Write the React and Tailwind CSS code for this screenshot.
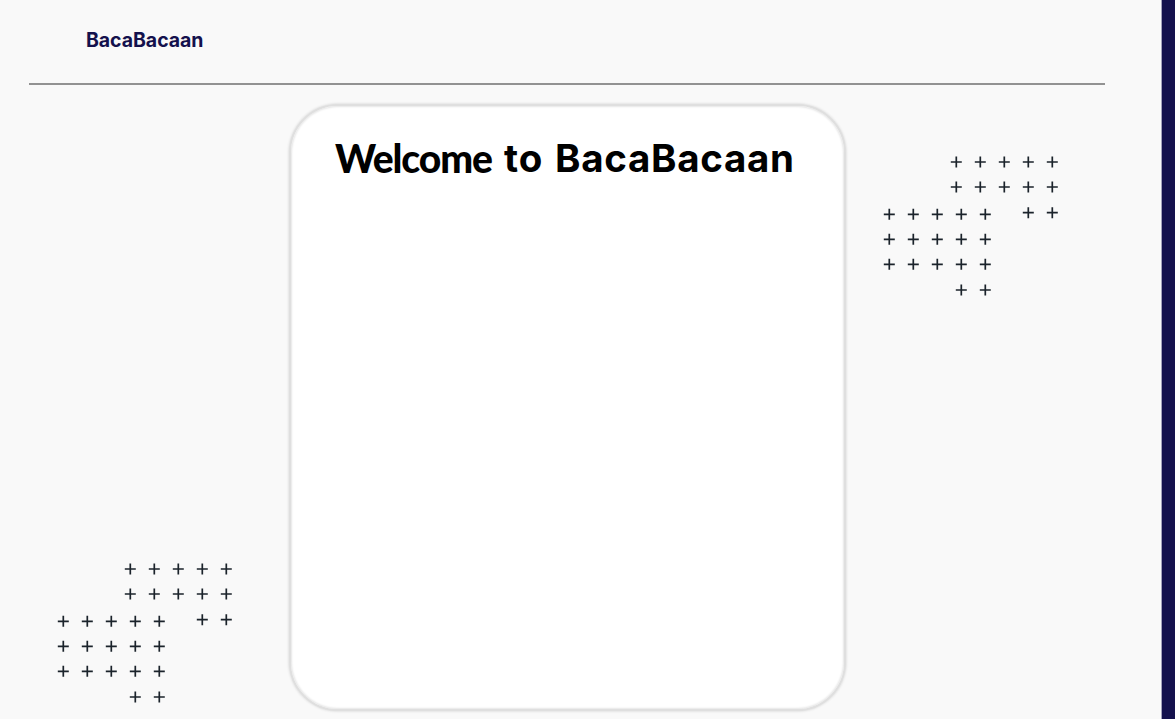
const marks = [
  ...[17, 42].flatMap((y) => [86, 110, 134, 158, 182].map((x) => [x, y])),
  [158, 67.7], [182, 67.7],
  ...[69.3, 94.3, 119.3].flatMap((y) => [19, 43, 67, 91, 115].map((x) => [x, y])),
  [91, 145], [115, 145],
];

function PlusCluster({ className }) {
  return (
    <svg width="200" height="160" viewBox="0 0 200 160" className={className} aria-hidden="true">
      <path
        d={marks.map(([x, y]) => `M${x - 5.2} ${y}h11M${x + 0.3} ${y - 5.5}v11`).join("")}
        stroke="#1b232b"
        strokeWidth="1.7"
        fill="none"
      />
    </svg>
  );
}

export default function App() {
  return (
    <div className="flex h-[719px] w-[1175px] overflow-hidden bg-[#f9f9f9] font-['Inter',sans-serif]">
      <div className="flex w-[1161px] flex-col">
        <header className="ml-[29px] flex h-[85px] w-[1076px] shrink-0 border-b-2 border-[#929292] pl-[57px] pt-[25px]">
          <span className="text-[19.5px] leading-[30px] font-bold tracking-[-0.05px] text-[#14114d]">BacaBacaan</span>
        </header>
        <div className="flex grow">
          <aside className="flex w-[289px] shrink-0 items-end pl-[44px] pb-[7px]">
            <PlusCluster className="shrink-0" />
          </aside>
          <main className="mt-[19px] h-[607px] w-[557px] shrink-0 rounded-[49px] border-2 border-[#dfdfdf] bg-white pl-[44px] pt-[29px] shadow-[0_0_2px_1px_#e4e4e4,inset_0_0_2px_1px_#e6e6e6]">
            <h1 className="flex text-[38.5px] leading-[46px] font-bold whitespace-nowrap text-black">
              <span className="w-[169px] font-['Lato',sans-serif] text-[39px] font-black tracking-[-1.1px]">Welcome</span>
              <span className="w-[51px] tracking-[1px]">to</span>
              <span className="tracking-[0.7px]">BacaBacaan</span>
            </h1>
          </main>
          <aside className="pl-[24px] pt-[60px]">
            <PlusCluster className="block" />
          </aside>
        </div>
      </div>
      <div className="grow border-l border-[#a4a2bb] bg-[#14114d]" />
    </div>
  );
}
